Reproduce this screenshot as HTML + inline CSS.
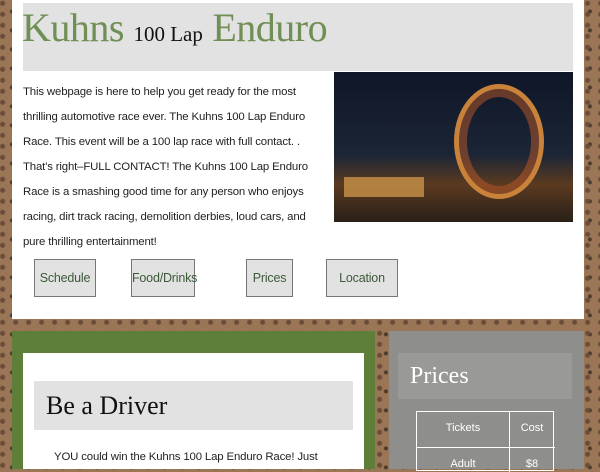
<!DOCTYPE html>
<html><head><style>
*{margin:0;padding:0;box-sizing:border-box}
body{width:600px;height:469px;overflow:hidden;position:relative;font-family:"Liberation Sans",sans-serif;
background:radial-gradient(circle at 20% 30%,#6a4c38 0 2px,transparent 3px) 0 0/13px 11px,
radial-gradient(circle at 70% 60%,#4a3a2c 0 1.5px,transparent 2.5px) 0 0/17px 19px,
#9a7657}
.a{position:absolute}
.btn{position:absolute;top:259px;height:38px;background:#e2e2e2;border:1px solid #777;color:#3c5a3a;font-size:12.5px;line-height:36px;text-align:center;letter-spacing:-0.2px}
p.t{font-size:11.4px;line-height:25px;color:#222;white-space:nowrap;letter-spacing:-0.15px}
</style></head><body>
<div class="a" style="left:12px;top:0;width:572px;height:319px;background:#fff"></div>
<div class="a" style="left:23px;top:3px;width:550px;height:68px;background:#e2e2e2"></div>
<div class="a" style="left:22px;top:4px;font-family:'Liberation Serif',serif;white-space:nowrap;color:#6f8f55;font-size:40px;letter-spacing:-0.5px">Kuhns <span style="color:#111;font-size:21px;letter-spacing:0">100 Lap</span> Enduro</div>
<div class="a" style="left:334px;top:72px;width:239px;height:150px;background:linear-gradient(#0e1628 0,#1c2536 55%,#5a3a20 75%,#2a2018 100%);overflow:hidden">
<div class="a" style="left:120px;top:12px;width:90px;height:115px;border-radius:50%;border:5px solid #c9823a;box-shadow:inset 0 0 0 8px rgba(190,90,40,.5)"></div>
<div class="a" style="left:10px;top:105px;width:80px;height:20px;background:#d9a050;opacity:.7"></div>
</div>
<p class="t a" style="left:23px;top:80px">This webpage is here to help you get ready for the most<br>thrilling automotive race ever. The Kuhns 100 Lap Enduro<br>Race. This event will be a 100 lap race with full contact. .<br>That's right–FULL CONTACT! The Kuhns 100 Lap Enduro<br>Race is a smashing good time for any person who enjoys<br>racing, dirt track racing, demolition derbies, loud cars, and<br>pure thrilling entertainment!</p>
<div class="btn" style="left:34px;width:62px">Schedule</div>
<div class="btn" style="left:131px;width:64px">Food/Drinks</div>
<div class="btn" style="left:246px;width:47px">Prices</div>
<div class="btn" style="left:326px;width:72px">Location</div>
<div class="a" style="left:12px;top:331px;width:363px;height:138px;background:#5e7f3a"></div>
<div class="a" style="left:23px;top:353px;width:341px;height:116px;background:#fff"></div>
<div class="a" style="left:34px;top:381px;width:319px;height:49px;background:#e2e2e2;font-family:'Liberation Serif',serif;font-size:26px;line-height:49px;padding-left:12px;color:#111">Be a Driver</div>
<div class="a" style="left:54px;top:451px;font-size:11.4px;color:#222;letter-spacing:-0.15px">YOU could win the Kuhns 100 Lap Enduro Race! Just</div>
<div class="a" style="left:389px;top:331px;width:195px;height:138px;background:#8e8f8c"></div>
<div class="a" style="left:398px;top:353px;width:174px;height:46px;background:#999a97;font-family:'Liberation Serif',serif;font-size:24px;line-height:46px;padding-left:12px;color:#fff">Prices</div>
<div class="a" style="left:416px;top:411px;width:138px;height:60px;border:1px solid #fff;color:#fff;font-size:11px">
<div class="a" style="left:92px;top:0;width:1px;height:60px;background:#fff"></div>
<div class="a" style="left:0;top:35px;width:138px;height:1px;background:#fff"></div>
<div class="a" style="left:0;top:10px;width:92px;text-align:center">Tickets</div>
<div class="a" style="left:93px;top:10px;width:44px;text-align:center">Cost</div>
<div class="a" style="left:0;top:46px;width:92px;text-align:center">Adult</div>
<div class="a" style="left:93px;top:46px;width:44px;text-align:center">$8</div>
</div>
</body></html>
